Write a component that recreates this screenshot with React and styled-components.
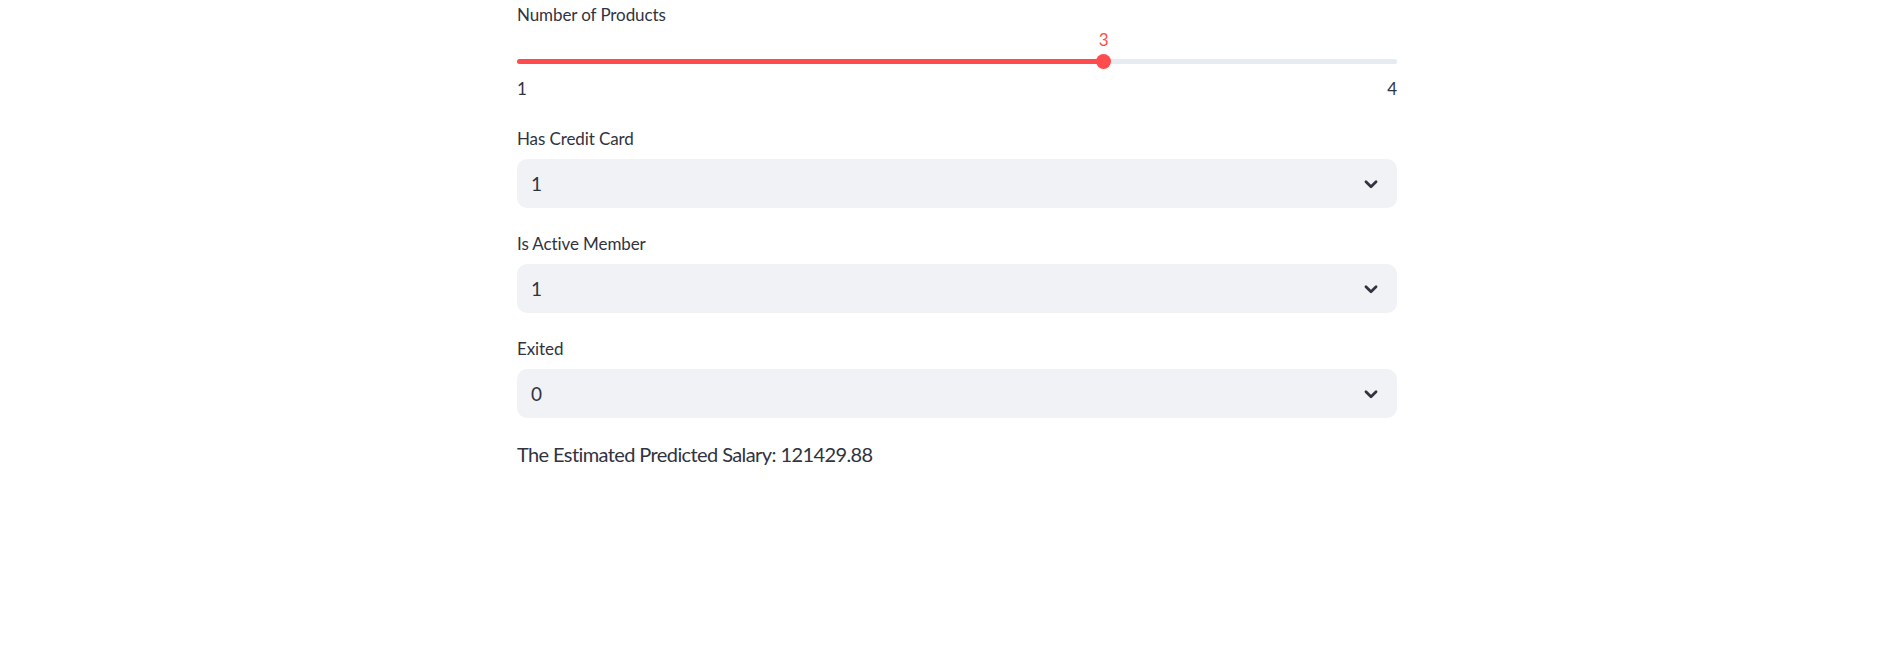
import React from "react";
import styled, { createGlobalStyle } from "styled-components";

const GlobalStyle = createGlobalStyle`
  html, body {
    margin: 0;
    padding: 0;
    background: #ffffff;
  }
  body {
    font-family: "Source Sans Pro", Lato, "Noto Sans", sans-serif;
    color: #31333f;
  }
`;

const Page = styled.div`
  width: 1898px;
  height: 668px;
  box-sizing: border-box;
  padding: 3px 501px 0 517px;
`;

const Block = styled.div`
  display: flex;
  flex-direction: column;
  gap: 24px;
`;

const Widget = styled.div`
  display: flex;
  flex-direction: column;
  margin-bottom: ${props => props.$after || 0}px;
`;

const Label = styled.label`
  font-size: 17px;
  line-height: 24px;
  height: 24px;
  letter-spacing: -0.1px;
  color: #31333f;
  margin-bottom: ${props => props.$gap || 0}px;
`;

const SliderBox = styled.div`
  position: relative;
  padding-top: 28px;
`;

const Track = styled.div`
  position: relative;
  height: 12px;
  display: flex;
  align-items: center;
  &::before {
    content: "";
    position: absolute;
    left: 0;
    right: 0;
    height: 5px;
    border-radius: 3px;
    background: #e6eaf1;
  }
`;

const Fill = styled.div`
  position: absolute;
  left: 0;
  height: 5px;
  border-radius: 3px;
  background: #ff4b4b;
`;

const Thumb = styled.div`
  position: absolute;
  width: 15px;
  height: 15px;
  margin-left: -7.5px;
  border-radius: 50%;
  background: #ff4b4b;
`;

const ThumbValue = styled.div`
  position: absolute;
  top: -27px;
  transform: translateX(-50%);
  font-size: 17px;
  line-height: 24px;
  color: #ff4b4b;
`;

const Ticks = styled.div`
  display: flex;
  justify-content: space-between;
  margin-top: 10px;
  font-size: 17px;
  line-height: 24px;
  color: #31333f;
`;

const Select = styled.div`
  height: 49px;
  box-sizing: border-box;
  border-radius: 10px;
  background: #f0f2f6;
  display: flex;
  align-items: center;
  justify-content: space-between;
  padding: 0 15px 0 14px;
  font-size: 19px;
  color: #31333f;
`;

const Result = styled.p`
  margin: -3px 0 0;
  font-size: 20px;
  line-height: 30px;
  letter-spacing: -0.6px;
  color: #31333f;
`;

const Chevron = () => (
  <svg width="22" height="22" viewBox="0 0 24 24" fill="none">
    <path d="M6.5 9.5l5.5 5.5 5.5-5.5" stroke="#31333f" strokeWidth="3" strokeLinecap="round" strokeLinejoin="round" />
  </svg>
);

const Slider = ({ label, min, max, value }) => {
  const pct = ((value - min) / (max - min)) * 100;
  return (
    <Widget $after={2}>
      <Label>{label}</Label>
      <SliderBox>
        <Track>
          <Fill style={{ width: pct + "%" }} />
          <Thumb style={{ left: pct + "%" }} />
          <ThumbValue style={{ left: pct + "%" }}>{value}</ThumbValue>
        </Track>
        <Ticks>
          <span>{min}</span>
          <span>{max}</span>
        </Ticks>
      </SliderBox>
    </Widget>
  );
};

const SelectBox = ({ label, value }) => (
  <Widget>
    <Label $gap={8}>{label}</Label>
    <Select>
      <span>{value}</span>
      <Chevron />
    </Select>
  </Widget>
);

export default function App() {
  return (
    <Page>
      <GlobalStyle />
      <Block>
        <Slider label="Number of Products" min={1} max={4} value={3} />
        <SelectBox label="Has Credit Card" value="1" />
        <SelectBox label="Is Active Member" value="1" />
        <SelectBox label="Exited" value="0" />
        <Result>The Estimated Predicted Salary: 121429.88</Result>
      </Block>
    </Page>
  );
}
